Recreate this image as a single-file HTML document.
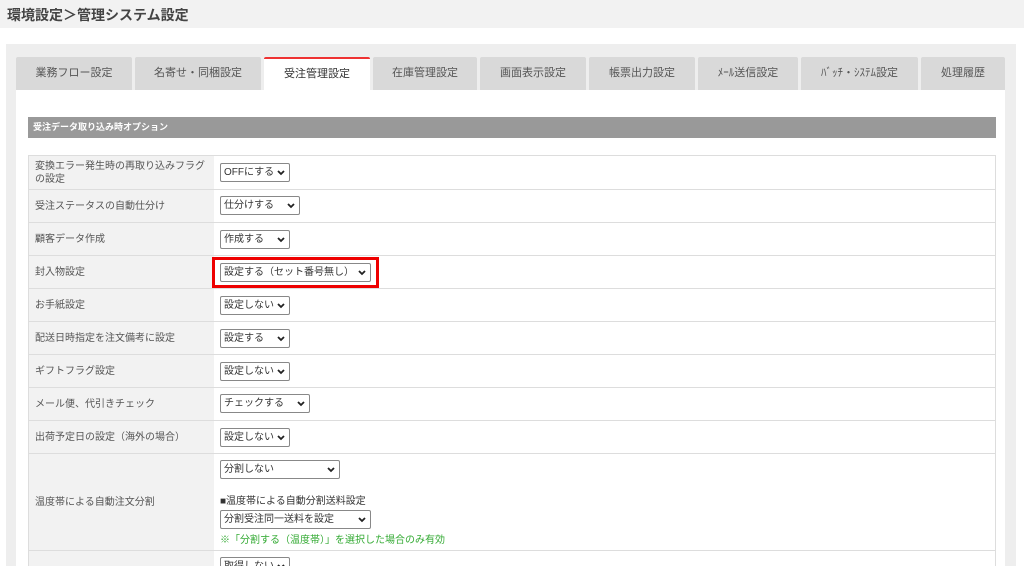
<!DOCTYPE html>
<html style="width:1024px;height:566px;overflow:hidden"><head><meta charset="utf-8"><style>
*{box-sizing:border-box;margin:0;padding:0}
body{width:1024px;height:566px;overflow:hidden;background:#fff;font-family:"Liberation Sans","Noto Sans CJK JP",sans-serif;color:#444;position:relative}
.hdr{position:absolute;left:0;top:0;width:1024px;height:28px;background:#f2f2f2}
.hdr span{position:absolute;left:7px;top:5px;font-size:14px;font-weight:bold;color:#444}
.panel{position:absolute;left:6px;top:44px;width:1010px;height:522px;background:#eee}
.tab{position:absolute;top:57px;height:33px;background:#d9d9d9;font-size:11px;color:#555;text-align:center;line-height:33px;border-radius:2px 2px 0 0}
.tab.on{background:#fff;border-top:2px solid #e33;line-height:31px;color:#333}
.content{position:absolute;left:16px;top:90px;width:989px;height:476px;background:#fff}
.sec{position:absolute;left:28px;top:117px;width:968px;height:21px;background:#999;color:#fff;font-size:9px;font-weight:bold;line-height:21px;padding-left:5px}
.lab{position:absolute;left:28px;width:187px;background:#f2f2f2;border:1px solid #ddd;font-size:10px;color:#555;padding:0 6px;display:flex;align-items:center;line-height:13px}
.val{position:absolute;left:214px;width:782px;border:1px solid #ddd;border-left:none;background:#fff}
.sel{position:absolute;left:220px;height:19px;border:1px solid #888;border-radius:2px;background:#fff;font-size:10px;color:#333;line-height:17px;padding-left:3px;white-space:nowrap}
.sel svg{position:absolute;right:4px;top:6px}
.red{position:absolute;left:212px;top:257px;width:167px;height:31px;border:3px solid #e00}
.t{position:absolute;left:220px;font-size:10px;color:#333}
</style></head><body>
<div class="hdr"><span>環境設定＞管理システム設定</span></div>
<div class="panel"></div>
<div class="content"></div>
<div class="tab" style="left:16px;width:116px">業務フロー設定</div>
<div class="tab" style="left:135px;width:126px">名寄せ・同梱設定</div>
<div class="tab on" style="left:264px;width:106px">受注管理設定</div>
<div class="tab" style="left:373px;width:104px">在庫管理設定</div>
<div class="tab" style="left:480px;width:106px">画面表示設定</div>
<div class="tab" style="left:589px;width:106px">帳票出力設定</div>
<div class="tab" style="left:698px;width:100px">ﾒｰﾙ送信設定</div>
<div class="tab" style="left:801px;width:117px">ﾊﾞｯﾁ・ｼｽﾃﾑ設定</div>
<div class="tab" style="left:921px;width:84px">処理履歴</div>
<div class="sec">受注データ取り込み時オプション</div>

<div class="lab" style="top:155px;height:35px">変換エラー発生時の再取り込みフラグの設定</div><div class="val" style="top:155px;height:35px"></div>
<div class="lab" style="top:189px;height:34px">受注ステータスの自動仕分け</div><div class="val" style="top:189px;height:34px"></div>
<div class="lab" style="top:222px;height:34px">顧客データ作成</div><div class="val" style="top:222px;height:34px"></div>
<div class="lab" style="top:255px;height:34px">封入物設定</div><div class="val" style="top:255px;height:34px"></div>
<div class="lab" style="top:288px;height:34px">お手紙設定</div><div class="val" style="top:288px;height:34px"></div>
<div class="lab" style="top:321px;height:34px">配送日時指定を注文備考に設定</div><div class="val" style="top:321px;height:34px"></div>
<div class="lab" style="top:354px;height:34px">ギフトフラグ設定</div><div class="val" style="top:354px;height:34px"></div>
<div class="lab" style="top:387px;height:34px">メール便、代引きチェック</div><div class="val" style="top:387px;height:34px"></div>
<div class="lab" style="top:420px;height:34px">出荷予定日の設定（海外の場合）</div><div class="val" style="top:420px;height:34px"></div>
<div class="lab" style="top:453px;height:98px">温度帯による自動注文分割</div><div class="val" style="top:453px;height:98px"></div>
<div class="lab" style="top:550px;height:16px;border-bottom:none"></div><div class="val" style="top:550px;height:16px;border-bottom:none"></div>

<div class="sel" style="top:163px;width:70px">OFFにする<svg width="8" height="6"><path d="M1 1L4 4L7 1" stroke="#222" stroke-width="1.8" fill="none"/></svg></div>
<div class="sel" style="top:196px;width:80px">仕分けする<svg width="8" height="6"><path d="M1 1L4 4L7 1" stroke="#222" stroke-width="1.8" fill="none"/></svg></div>
<div class="sel" style="top:230px;width:70px">作成する<svg width="8" height="6"><path d="M1 1L4 4L7 1" stroke="#222" stroke-width="1.8" fill="none"/></svg></div>
<div class="sel" style="top:263px;width:151px">設定する（セット番号無し）<svg width="8" height="6"><path d="M1 1L4 4L7 1" stroke="#222" stroke-width="1.8" fill="none"/></svg></div>
<div class="red"></div>
<div class="sel" style="top:296px;width:70px">設定しない<svg width="8" height="6"><path d="M1 1L4 4L7 1" stroke="#222" stroke-width="1.8" fill="none"/></svg></div>
<div class="sel" style="top:329px;width:70px">設定する<svg width="8" height="6"><path d="M1 1L4 4L7 1" stroke="#222" stroke-width="1.8" fill="none"/></svg></div>
<div class="sel" style="top:362px;width:70px">設定しない<svg width="8" height="6"><path d="M1 1L4 4L7 1" stroke="#222" stroke-width="1.8" fill="none"/></svg></div>
<div class="sel" style="top:394px;width:90px">チェックする<svg width="8" height="6"><path d="M1 1L4 4L7 1" stroke="#222" stroke-width="1.8" fill="none"/></svg></div>
<div class="sel" style="top:428px;width:70px">設定しない<svg width="8" height="6"><path d="M1 1L4 4L7 1" stroke="#222" stroke-width="1.8" fill="none"/></svg></div>
<div class="sel" style="top:460px;width:120px">分割しない<svg width="8" height="6"><path d="M1 1L4 4L7 1" stroke="#222" stroke-width="1.8" fill="none"/></svg></div>
<div class="t" style="top:492px">■温度帯による自動分割送料設定</div>
<div class="sel" style="top:510px;width:151px">分割受注同一送料を設定<svg width="8" height="6"><path d="M1 1L4 4L7 1" stroke="#222" stroke-width="1.8" fill="none"/></svg></div>
<div class="t" style="top:531px;color:#3a3">※「分割する（温度帯）」を選択した場合のみ有効</div>
<div class="sel" style="top:557px;width:70px">取得しない<svg width="8" height="6"><path d="M1 1L4 4L7 1" stroke="#222" stroke-width="1.8" fill="none"/></svg></div>
</body></html>
